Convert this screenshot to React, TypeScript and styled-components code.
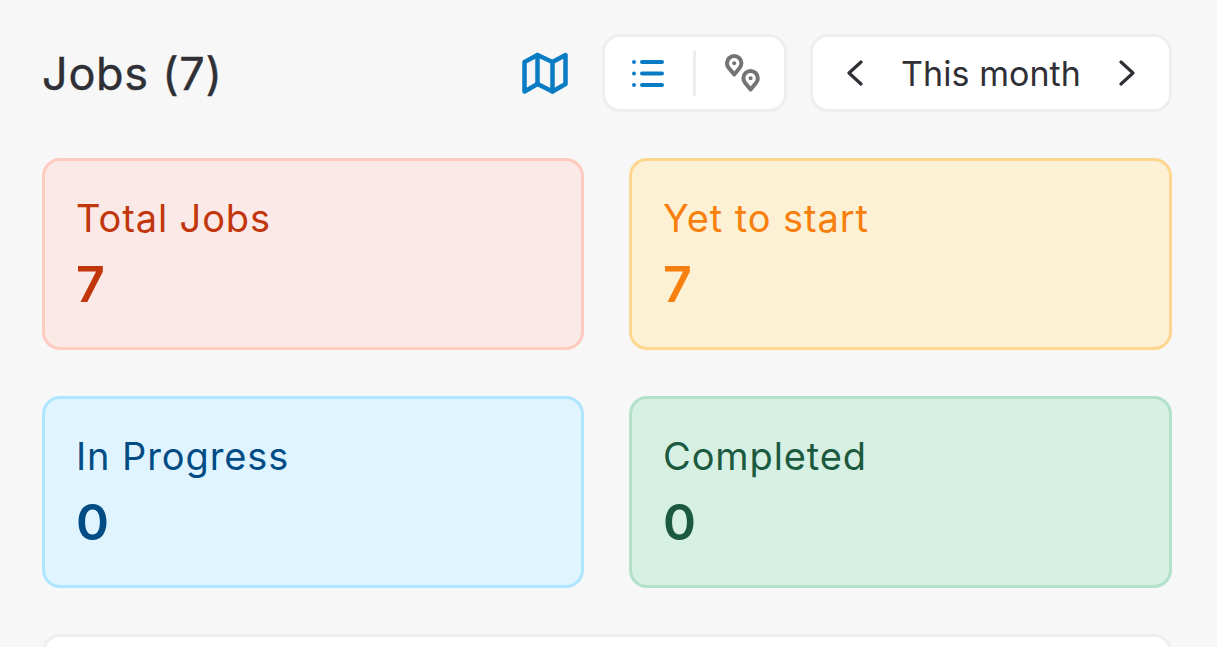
import React from "react";
import styled, { createGlobalStyle } from "styled-components";

const GlobalStyle = createGlobalStyle`
  html, body {
    margin: 0;
    height: 100%;
    overflow: hidden;
    background: #f7f7f7;
    font-family: Inter, "Liberation Sans", sans-serif;
  }
`;

const Page = styled.div`
  height: 647px;
  overflow: hidden;
  padding: 34px 45px 0 42px;
  display: flex;
  flex-direction: column;
`;

const Header = styled.header`
  display: flex;
  align-items: center;
  height: 78px;
  flex: none;
`;

const Title = styled.h1`
  flex: 1;
  margin: 0;
  font-size: 45px;
  font-weight: 400;
  letter-spacing: 0.7px;
  -webkit-text-stroke: 0.4px #2f3036;
  color: #2f3036;
`;

const MapButton = styled.div`
  display: flex;
  margin-right: 34px;
`;

const Panel = styled.div`
  display: flex;
  align-items: center;
  box-sizing: border-box;
  height: 78px;
  background: #fff;
  border: 3px solid #eeeeee;
  border-radius: 18px;
`;

const ViewSwitch = styled(Panel)`
  width: 185px;
  margin-right: 23px;
  padding: 0 24px 0 27px;
  justify-content: space-between;
`;

const Divider = styled.span`
  width: 3px;
  height: 45px;
  background: #eeeeee;
`;

const MonthPicker = styled(Panel)`
  width: 362px;
  padding: 0 34px;
  justify-content: space-between;
`;

const MonthLabel = styled.span`
  font-size: 34px;
  letter-spacing: 0.05px;
  color: #2f3036;
`;

const Stats = styled.section`
  display: grid;
  grid-template-columns: 542px 543px;
  column-gap: 45px;
  row-gap: 46px;
  margin-top: 46px;
  flex: none;
`;

type Tone = { bg: string; line: string; fg: string };

const StatCard = styled.div<{ $tone: Tone }>`
  box-sizing: border-box;
  height: 192px;
  padding: 35px 32px 0 31px;
  background: ${(p) => p.$tone.bg};
  border: 3px solid ${(p) => p.$tone.line};
  border-radius: 18px;
  color: ${(p) => p.$tone.fg};
`;

const StatLabel = styled.div`
  font-size: 38px;
  line-height: 44px;
  letter-spacing: 0.9px;
`;

const StatValue = styled.div`
  margin-top: 15px;
  font-size: 50px;
  line-height: 58px;
  font-weight: 600;
`;

const JobList = styled(Panel)`
  margin-top: 46px;
  width: 1130px;
  height: 200px;
  flex: none;
`;

const MapIcon = () => (
  <svg width="46" height="42" viewBox="0 0 46 42" fill="none" stroke="#0a7cc4" strokeWidth="4.5" strokeLinejoin="round" strokeLinecap="round">
    <path d="M2.5 10 L15.5 3 L30.5 10 L43.5 3 V32 L30.5 39.5 L15.5 32 L2.5 39.5 Z" />
    <path d="M15.5 3 V32" />
    <path d="M30.5 10 V39.5" />
  </svg>
);

const ListIcon = () => (
  <svg width="32" height="27" viewBox="0 0 32 27" fill="#0a7cc4">
    <circle cx="2" cy="2" r="2" />
    <circle cx="2" cy="13.5" r="2" />
    <circle cx="2" cy="25" r="2" />
    <rect x="8" y="0" width="24" height="4" rx="2" />
    <rect x="8" y="11.5" width="24" height="4" rx="2" />
    <rect x="8" y="23" width="24" height="4" rx="2" />
  </svg>
);

const PinsIcon = () => (
  <svg width="35" height="38" viewBox="0 0 35 38" fill="none" stroke="#737373" strokeWidth="4" strokeLinejoin="round">
    <path d="M9.2 20.5 L3.8 14 A7.2 7.2 0 1 1 14.6 14 Z" />
    <circle cx="9.2" cy="9.2" r="2" fill="#737373" stroke="none" />
    <path d="M25.6 35.5 L20.2 29 A7.2 7.2 0 1 1 31 29 Z" />
    <circle cx="25.6" cy="24.2" r="2" fill="#737373" stroke="none" />
  </svg>
);

const Chevron = ({ flip }: { flip?: boolean }) => (
  <svg width="16" height="26" viewBox="0 0 16 26" fill="none" stroke="#2f3036" strokeWidth="3.2" strokeLinecap="round" strokeLinejoin="round">
    <path d={flip ? "M2 2 L14 13 L2 24" : "M14 2 L2 13 L14 24"} />
  </svg>
);

const tones: Record<string, Tone> = {
  red: { bg: "#fbe9e7", line: "#ffcabf", fg: "#c1360b" },
  amber: { bg: "#fdf1d5", line: "#ffd68f", fg: "#f77f0d" },
  blue: { bg: "#dff4fe", line: "#aee5ff", fg: "#014c85" },
  green: { bg: "#d7f0e4", line: "#b3e0cb", fg: "#1c5a3f" },
};

const stats = [
  { label: "Total Jobs", value: 7, tone: tones.red },
  { label: "Yet to start", value: 7, tone: tones.amber },
  { label: "In Progress", value: 0, tone: tones.blue },
  { label: "Completed", value: 0, tone: tones.green },
];

export default function App() {
  return (
    <Page>
      <GlobalStyle />
      <Header>
        <Title>Jobs (7)</Title>
        <MapButton>
          <MapIcon />
        </MapButton>
        <ViewSwitch>
          <ListIcon />
          <Divider />
          <PinsIcon />
        </ViewSwitch>
        <MonthPicker>
          <Chevron />
          <MonthLabel>This month</MonthLabel>
          <Chevron flip />
        </MonthPicker>
      </Header>
      <Stats>
        {stats.map((s) => (
          <StatCard key={s.label} $tone={s.tone}>
            <StatLabel>{s.label}</StatLabel>
            <StatValue>{s.value}</StatValue>
          </StatCard>
        ))}
      </Stats>
      <JobList />
    </Page>
  );
}
